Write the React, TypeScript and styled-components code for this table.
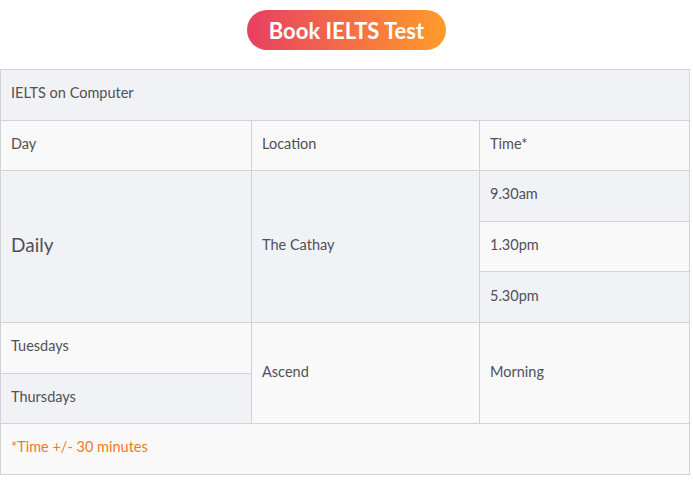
import React from 'react'
import styled, { createGlobalStyle } from 'styled-components'

const GlobalStyle = createGlobalStyle`
    body {
        margin: 0;
        background: #ffffff;
        font-family: Lato, "Noto Sans", sans-serif;
    }
`

const Page = styled.div`
    width: 693px;
    display: flex;
    flex-direction: column;
    align-items: center;
    padding-top: 10px;
`

const BookButton = styled.a`
    display: inline-flex;
    align-items: center;
    justify-content: center;
    width: 199px;
    height: 40px;
    border-radius: 20px;
    background: linear-gradient(to right, #e83f62, #ff9c2a);
    color: #ffffff;
    font-family: Lato, "Noto Sans", sans-serif;
    font-weight: 700;
    font-size: 22px;
    text-decoration: none;
    margin-bottom: 19px;
`

const Table = styled.table`
    width: 690px;
    align-self: flex-start;
    border-collapse: collapse;
    color: #4f4f55;
    font-size: 14px;
    tr:nth-child(odd) td {
        background: #f1f2f6;
    }
    tr:nth-child(even) td {
        background: #faf9fa;
    }
`

const Cell = styled.td<{ $big?: boolean; $note?: boolean }>`
    border: 1px solid #d3d3d6;
    height: 50.6px;
    box-sizing: border-box;
    padding: 0 10px 4px;
    vertical-align: middle;
    font-size: ${p => (p.$big ? '19px' : '14.5px')};
    color: ${p => (p.$note ? '#f47a22' : '#505056')};
`

export default function App() {
    return (
        <Page>
            <GlobalStyle />
            <BookButton href="#">Book IELTS Test</BookButton>
            <Table>
                <colgroup>
                    <col style={{ width: 251 }} />
                    <col style={{ width: 228 }} />
                    <col />
                </colgroup>
                <tbody>
                    <tr>
                        <Cell colSpan={3}>IELTS on Computer</Cell>
                    </tr>
                    <tr>
                        <Cell>Day</Cell>
                        <Cell>Location</Cell>
                        <Cell>Time*</Cell>
                    </tr>
                    <tr>
                        <Cell rowSpan={3} $big>Daily</Cell>
                        <Cell rowSpan={3}>The Cathay</Cell>
                        <Cell>9.30am</Cell>
                    </tr>
                    <tr>
                        <Cell>1.30pm</Cell>
                    </tr>
                    <tr>
                        <Cell>5.30pm</Cell>
                    </tr>
                    <tr>
                        <Cell>Tuesdays</Cell>
                        <Cell rowSpan={2}>Ascend</Cell>
                        <Cell rowSpan={2}>Morning</Cell>
                    </tr>
                    <tr>
                        <Cell>Thursdays</Cell>
                    </tr>
                    <tr>
                        <Cell colSpan={3} $note>*Time +/- 30 minutes</Cell>
                    </tr>
                </tbody>
            </Table>
        </Page>
    )
}
